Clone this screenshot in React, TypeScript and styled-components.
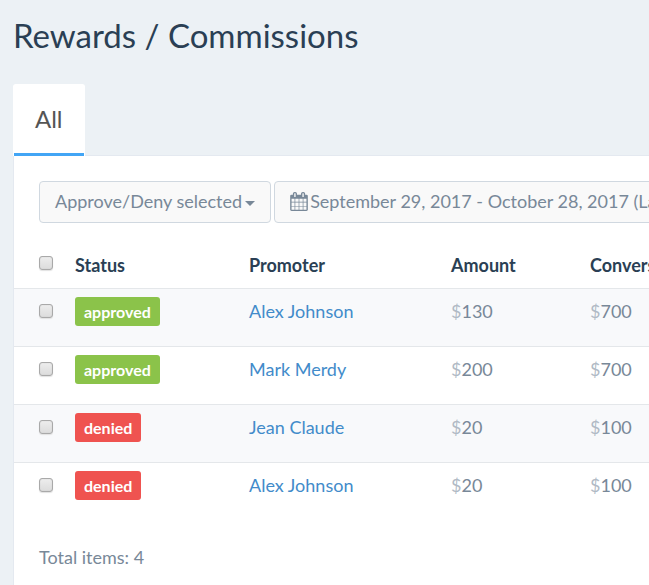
import React, { useState } from "react";
import styled, { createGlobalStyle } from "styled-components";

const GlobalStyle = createGlobalStyle`
  *, *::before, *::after { box-sizing: border-box; }
  html, body { margin: 0; background: #ecf1f5; }
  body {
    overflow-x: hidden;
    font-family: Lato, "Liberation Sans", sans-serif;
    font-size: 18px;
    line-height: 26px;
    color: #788898;
  }
`;

const Page = styled.main`
  display: flex;
  flex-direction: column;
  min-height: 100vh;
  padding: 11px 0 0 13px;
`;

const Title = styled.h1`
  margin: 0 0 25px;
  font-size: 33px;
  font-weight: 400;
  line-height: 48px;
  color: #2a3f54;
`;

const TabList = styled.div`
  position: relative;
  z-index: 1;
  display: flex;
`;

const Tab = styled.button`
  height: 72px;
  padding: 0 21px 4px;
  border: 1px solid #fff;
  border-bottom: 0;
  border-radius: 3px 3px 0 0;
  background: #fff;
  box-shadow: inset 0 -3px 0 #42a5f5;
  font: 400 24px/32px Lato, "Liberation Sans", sans-serif;
  color: #555;
`;

const Panel = styled.section`
  flex: 1;
  margin-top: -1px;
  border: solid #e4e9f0;
  border-width: 1px 0 0 1px;
  background: #fff;
`;

const Toolbar = styled.div`
  display: flex;
  gap: 3px;
  padding: 25px 25px 18px;
`;

const ToolButton = styled.button`
  display: flex;
  flex: none;
  align-items: center;
  gap: 2px;
  height: 42px;
  padding: 0 15px 2px;
  border: 1px solid #d0d8e0;
  border-radius: 4px;
  background: #f9f9f9;
  font: inherit;
  color: #788898;
  white-space: nowrap;
`;

const Caret = styled.span`
  width: 0;
  margin: 5px 0 0 1px;
  border: solid transparent;
  border-width: 5px 5px 0;
  border-top-color: currentColor;
`;

const Table = styled.table`
  width: 100%;
  min-width: 800px;
  border-collapse: collapse;
  table-layout: fixed;
`;

const Column = styled.col<{ $width?: number }>`
  width: ${({ $width }) => ($width ? `${$width}px` : "auto")};
`;

const HeadCell = styled.th`
  height: 47px;
  padding: 1px 8px 0 0;
  text-align: left;
  font-weight: 700;
  color: #2a3f54;
  white-space: nowrap;

  &:first-child { padding-left: 25px; }
`;

const Row = styled.tr`
  border-top: 1px solid #e4e7ea;

  &:nth-child(odd) { background: #f8f9fb; }
`;

const Cell = styled.td`
  height: 58px;
  padding: 9px 8px 0 0;
  vertical-align: top;

  &:first-child { padding-left: 25px; }
`;

const CheckBox = styled.input`
  display: block;
  appearance: none;
  width: 14px;
  height: 14px;
  margin: 6px 0 0;
  border: 1px solid #a9a9a9;
  border-radius: 3px;
  background: linear-gradient(#ededed, #dcdcdc);
  box-shadow: 0 1px 1px #e2e2e2, inset 0 0 1px #bbb;

  &:checked { background: #42a5f5; }

  th & { margin-top: -4px; }
`;

const Badge = styled.span<{ $status: Status }>`
  display: block;
  width: fit-content;
  height: 29px;
  margin-top: -1px;
  padding: 1px 9px 0;
  border-radius: 3px;
  background: ${({ $status }) => ($status === "approved" ? "#8bc34a" : "#ef5350")};
  font-size: 16px;
  font-weight: 700;
  line-height: 28px;
  color: #fff;
`;

const PromoterLink = styled.a`
  color: #428bca;
  text-decoration: none;
`;

const Currency = styled.span`
  color: #b0bac5;
`;

const Total = styled.p`
  margin: 0;
  padding: 24px 25px;
`;

type Status = "approved" | "denied";

const rewards: { status: Status; promoter: string; amount: number; conversion: number }[] = [
  { status: "approved", promoter: "Alex Johnson", amount: 130, conversion: 700 },
  { status: "approved", promoter: "Mark Merdy", amount: 200, conversion: 700 },
  { status: "denied", promoter: "Jean Claude", amount: 20, conversion: 100 },
  { status: "denied", promoter: "Alex Johnson", amount: 20, conversion: 100 },
];

function CalendarIcon() {
  return (
    <svg width="18" height="19" viewBox="0 0 1664 1792" fill="currentColor" aria-hidden="true">
      <path d="M128 1664h288v-288h-288v288zm352 0h320v-288h-320v288zm-352-352h288v-320h-288v320zm352 0h320v-320h-320v320zm-352-384h288v-288h-288v288zm736 736h320v-288h-320v288zm-384-736h320v-288h-320v288zm768 736h288v-288h-288v288zm-384-352h320v-320h-320v320zm-352-864v-288q0-13-9.5-22.5t-22.5-9.5h-64q-13 0-22.5 9.5t-9.5 22.5v288q0 13 9.5 22.5t22.5 9.5h64q13 0 22.5-9.5t9.5-22.5zm736 864h288v-320h-288v320zm-384-384h320v-288h-320v288zm384 0h288v-288h-288v288zm32-480v-288q0-13-9.5-22.5t-22.5-9.5h-64q-13 0-22.5 9.5t-9.5 22.5v288q0 13 9.5 22.5t22.5 9.5h64q13 0 22.5-9.5t9.5-22.5zm384-64v1280q0 52-38 90t-90 38h-1408q-52 0-90-38t-38-90v-1280q0-52 38-90t90-38h128v-96q0-66 47-113t113-47h64q66 0 113 47t47 113v96h384v-96q0-66 47-113t113-47h64q66 0 113 47t47 113v96h128q52 0 90 38t38 90z" />
    </svg>
  );
}

function Money({ value }: { value: number }) {
  return (
    <>
      <Currency>$</Currency>
      {value}
    </>
  );
}

export default function App() {
  const [selected, setSelected] = useState<number[]>([]);
  const allSelected = selected.length === rewards.length;

  const toggle = (index: number) =>
    setSelected((current) =>
      current.includes(index) ? current.filter((item) => item !== index) : [...current, index]
    );

  return (
    <>
      <GlobalStyle />
      <Page>
        <Title>Rewards / Commissions</Title>
        <TabList role="tablist">
          <Tab role="tab" id="tab-all" aria-selected="true" aria-controls="panel-all">
            All
          </Tab>
        </TabList>
        <Panel role="tabpanel" id="panel-all" aria-labelledby="tab-all">
          <Toolbar>
            <ToolButton aria-haspopup="menu">
              Approve/Deny selected
              <Caret />
            </ToolButton>
            <ToolButton>
              <CalendarIcon />
              September 29, 2017 - October 28, 2017 (Last 30 days)
            </ToolButton>
          </Toolbar>
          <Table>
            <colgroup>
              <Column $width={61} />
              <Column $width={174} />
              <Column $width={202} />
              <Column $width={139} />
              <Column />
            </colgroup>
            <thead>
              <tr>
                <HeadCell>
                  <CheckBox
                    type="checkbox"
                    aria-label="Select all"
                    checked={allSelected}
                    onChange={() => setSelected(allSelected ? [] : rewards.map((_, index) => index))}
                  />
                </HeadCell>
                <HeadCell>Status</HeadCell>
                <HeadCell>Promoter</HeadCell>
                <HeadCell>Amount</HeadCell>
                <HeadCell>Conversion amount</HeadCell>
              </tr>
            </thead>
            <tbody>
              {rewards.map((reward, index) => (
                <Row key={index}>
                  <Cell>
                    <CheckBox
                      type="checkbox"
                      aria-label={`Select reward ${index + 1}, ${reward.promoter}`}
                      checked={selected.includes(index)}
                      onChange={() => toggle(index)}
                    />
                  </Cell>
                  <Cell>
                    <Badge $status={reward.status}>{reward.status}</Badge>
                  </Cell>
                  <Cell>
                    <PromoterLink href="#promoter">{reward.promoter}</PromoterLink>
                  </Cell>
                  <Cell>
                    <Money value={reward.amount} />
                  </Cell>
                  <Cell>
                    <Money value={reward.conversion} />
                  </Cell>
                </Row>
              ))}
            </tbody>
          </Table>
          <Total>Total items: {rewards.length}</Total>
        </Panel>
      </Page>
    </>
  );
}
